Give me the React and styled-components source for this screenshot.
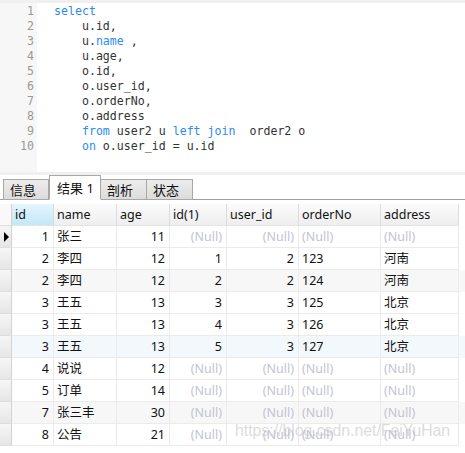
import React from "react";
import styled, { createGlobalStyle, css } from "styled-components";

const GlobalStyle = createGlobalStyle`
  html, body {
    margin: 0;
    padding: 0;
    background: #ffffff;
    overflow: hidden;
  }
  body {
    font-family: "Noto Sans", "Noto Sans CJK SC", sans-serif;
  }
`;

const CODE = [
  [["k", "select"]],
  [["t", "    u.id,"]],
  [["t", "    u."], ["k", "name"], ["t", " ,"]],
  [["t", "    u.age,"]],
  [["t", "    o.id,"]],
  [["t", "    o.user_id,"]],
  [["t", "    o.orderNo,"]],
  [["t", "    o.address"]],
  [["t", "    "], ["k", "from"], ["t", " user2 u "], ["k", "left join"], ["t", "  order2 o"]],
  [["t", "    "], ["k", "on"], ["t", " o.user_id = u.id"]],
];

const COLS = [
  { key: "id", label: "id", w: 42, num: true },
  { key: "name", label: "name", w: 63 },
  { key: "age", label: "age", w: 53, num: true },
  { key: "oid", label: "id(1)", w: 57, num: true },
  { key: "uid", label: "user_id", w: 72, num: true },
  { key: "no", label: "orderNo", w: 82 },
  { key: "addr", label: "address", w: 78 },
];

const N = null;
const ROWS = [
  [1, "张三", 11, N, N, N, N],
  [2, "李四", 12, 1, 2, "123", "河南"],
  [2, "李四", 12, 2, 2, "124", "河南"],
  [3, "王五", 13, 3, 3, "125", "北京"],
  [3, "王五", 13, 4, 3, "126", "北京"],
  [3, "王五", 13, 5, 3, "127", "北京"],
  [4, "说说", 12, N, N, N, N],
  [5, "订单", 14, N, N, N, N],
  [7, "张三丰", 30, N, N, N, N],
  [8, "公告", 21, N, N, N, N],
];

const gridCols = `12px ${COLS.map((c) => c.w + "px").join(" ")}`;

const Page = styled.div`
  width: 465px;
  height: 453px;
  display: flex;
  flex-direction: column;
  background: #fff;
`;

const Editor = styled.div`
  display: flex;
  height: 169px;
  border-top: 3px solid #f0f0f0;
  border-bottom: 3px solid #f0f0f0;
`;

const Gutter = styled.div`
  width: 37px;
  background: #f7f7f7;
  padding-top: 1px;
  box-sizing: border-box;
`;

const LineNo = styled.div`
  height: 15px;
  line-height: 15px;
  padding-right: 3px;
  text-align: right;
  font-family: "DejaVu Sans Mono", "Liberation Mono", monospace;
  font-size: 11.6px;
  color: #999999;
`;

const Code = styled.div`
  flex: 1;
  padding: 1px 0 0 17px;
`;

const CodeLine = styled.div`
  height: 15px;
  line-height: 15px;
  white-space: pre;
  font-family: "DejaVu Sans Mono", "Liberation Mono", monospace;
  font-size: 11.6px;
  color: #333333;
`;

const Kw = styled.span`
  color: #2b8cf0;
`;

const TabBar = styled.div`
  display: flex;
  align-items: flex-end;
  height: 24px;
  padding-left: 3px;
  border-bottom: 1px solid #a0a0a0;
`;

const Tab = styled.div`
  box-sizing: border-box;
  width: ${(p) => p.$w}px;
  height: 21px;
  margin-bottom: -1px;
  padding-left: 6px;
  border: 1px solid #a8a8a8;
  border-left-width: ${(p) => (p.$first ? 1 : 0)}px;
  background: linear-gradient(#ececec, #dcdcdc);
  font-size: 13px;
  line-height: 20px;
  color: #111;
  ${(p) =>
    p.$active &&
    css`
      height: 25px;
      background: #ffffff;
      border-left-width: 1px;
      border-bottom-color: #ffffff;
      line-height: 24px;
      padding-left: 7px;
    `}
`;

const Grid = styled.div`
  position: relative;
  flex: 1;
  padding-top: 4px;
`;

const Row = styled.div`
  display: grid;
  grid-template-columns: ${gridCols};
  height: 22px;
  background: ${(p) => p.$bg || "#ffffff"};
`;

const HeadCell = styled.div`
  box-sizing: border-box;
  height: 22px;
  padding-left: 3px;
  border-right: 1px solid #dcdcdc;
  border-bottom: 1px solid #e4e4e4;
  background: ${(p) =>
    p.$sel
      ? "linear-gradient(#e4f5fd, #c3e7f7)"
      : "linear-gradient(#fbfbfb, #eeeeee)"};
  font-size: 12.5px;
  line-height: 22px;
  color: #111;
`;

const Indicator = styled.div`
  box-sizing: border-box;
  height: 22px;
  border-right: 1px solid #d2d2d2;
  border-bottom: 1px solid #dedede;
  background: ${(p) => (p.$head ? "#f9f9f9" : "linear-gradient(#f6f6f6, #e6e6e6)")};
  display: flex;
  align-items: center;
  padding-left: 4px;
`;

const Arrow = styled.span`
  width: 0;
  height: 0;
  border-top: 5px solid transparent;
  border-bottom: 5px solid transparent;
  border-left: 5px solid #000;
`;

const Cell = styled.div`
  box-sizing: border-box;
  height: 22px;
  padding: 0 4px 0 3px;
  border-right: 1px solid #ebebeb;
  border-bottom: 1px solid #ebebeb;
  text-align: ${(p) => (p.$num ? "right" : "left")};
  font-size: 12.5px;
  line-height: 22px;
  white-space: nowrap;
  overflow: hidden;
  color: ${(p) => (p.$null ? "#c3c3d3" : "#111")};
`;

const Watermark = styled.div`
  position: absolute;
  left: 235px;
  top: 222px;
  font-family: "Liberation Sans", Arial, sans-serif;
  font-size: 15.8px;
  color: rgba(190, 190, 190, 0.55);
  white-space: nowrap;
  pointer-events: none;
`;

const rowBg = (i) => {
  if (i === 5) return "#f3f8fd";
  if (i % 3 === 2) return "#f7f7f7";
  return "#ffffff";
};

export default function App() {
  return (
    <Page>
      <GlobalStyle />
      <Editor>
        <Gutter>
          {CODE.map((_, i) => (
            <LineNo key={i}>{i + 1}</LineNo>
          ))}
        </Gutter>
        <Code>
          {CODE.map((parts, i) => (
            <CodeLine key={i}>
              {parts.map(([t, s], j) =>
                t === "k" ? <Kw key={j}>{s}</Kw> : <span key={j}>{s}</span>
              )}
            </CodeLine>
          ))}
        </Code>
      </Editor>
      <TabBar>
        <Tab $w={46} $first>信息</Tab>
        <Tab $w={52} $active>结果 1</Tab>
        <Tab $w={46}>剖析</Tab>
        <Tab $w={46}>状态</Tab>
      </TabBar>
      <Grid>
        <Row>
          <Indicator $head />
          {COLS.map((c, i) => (
            <HeadCell key={c.key} $sel={i === 0}>
              {c.label}
            </HeadCell>
          ))}
        </Row>
        {ROWS.map((r, i) => (
          <Row key={i} $bg={rowBg(i)}>
            <Indicator>{i === 0 && <Arrow />}</Indicator>
            {r.map((v, j) => (
              <Cell key={j} $num={COLS[j].num} $null={v === null}>
                {v === null ? "(Null)" : v}
              </Cell>
            ))}
          </Row>
        ))}
        <Watermark>https://blog.csdn.net/FeiYuHan</Watermark>
      </Grid>
    </Page>
  );
}
